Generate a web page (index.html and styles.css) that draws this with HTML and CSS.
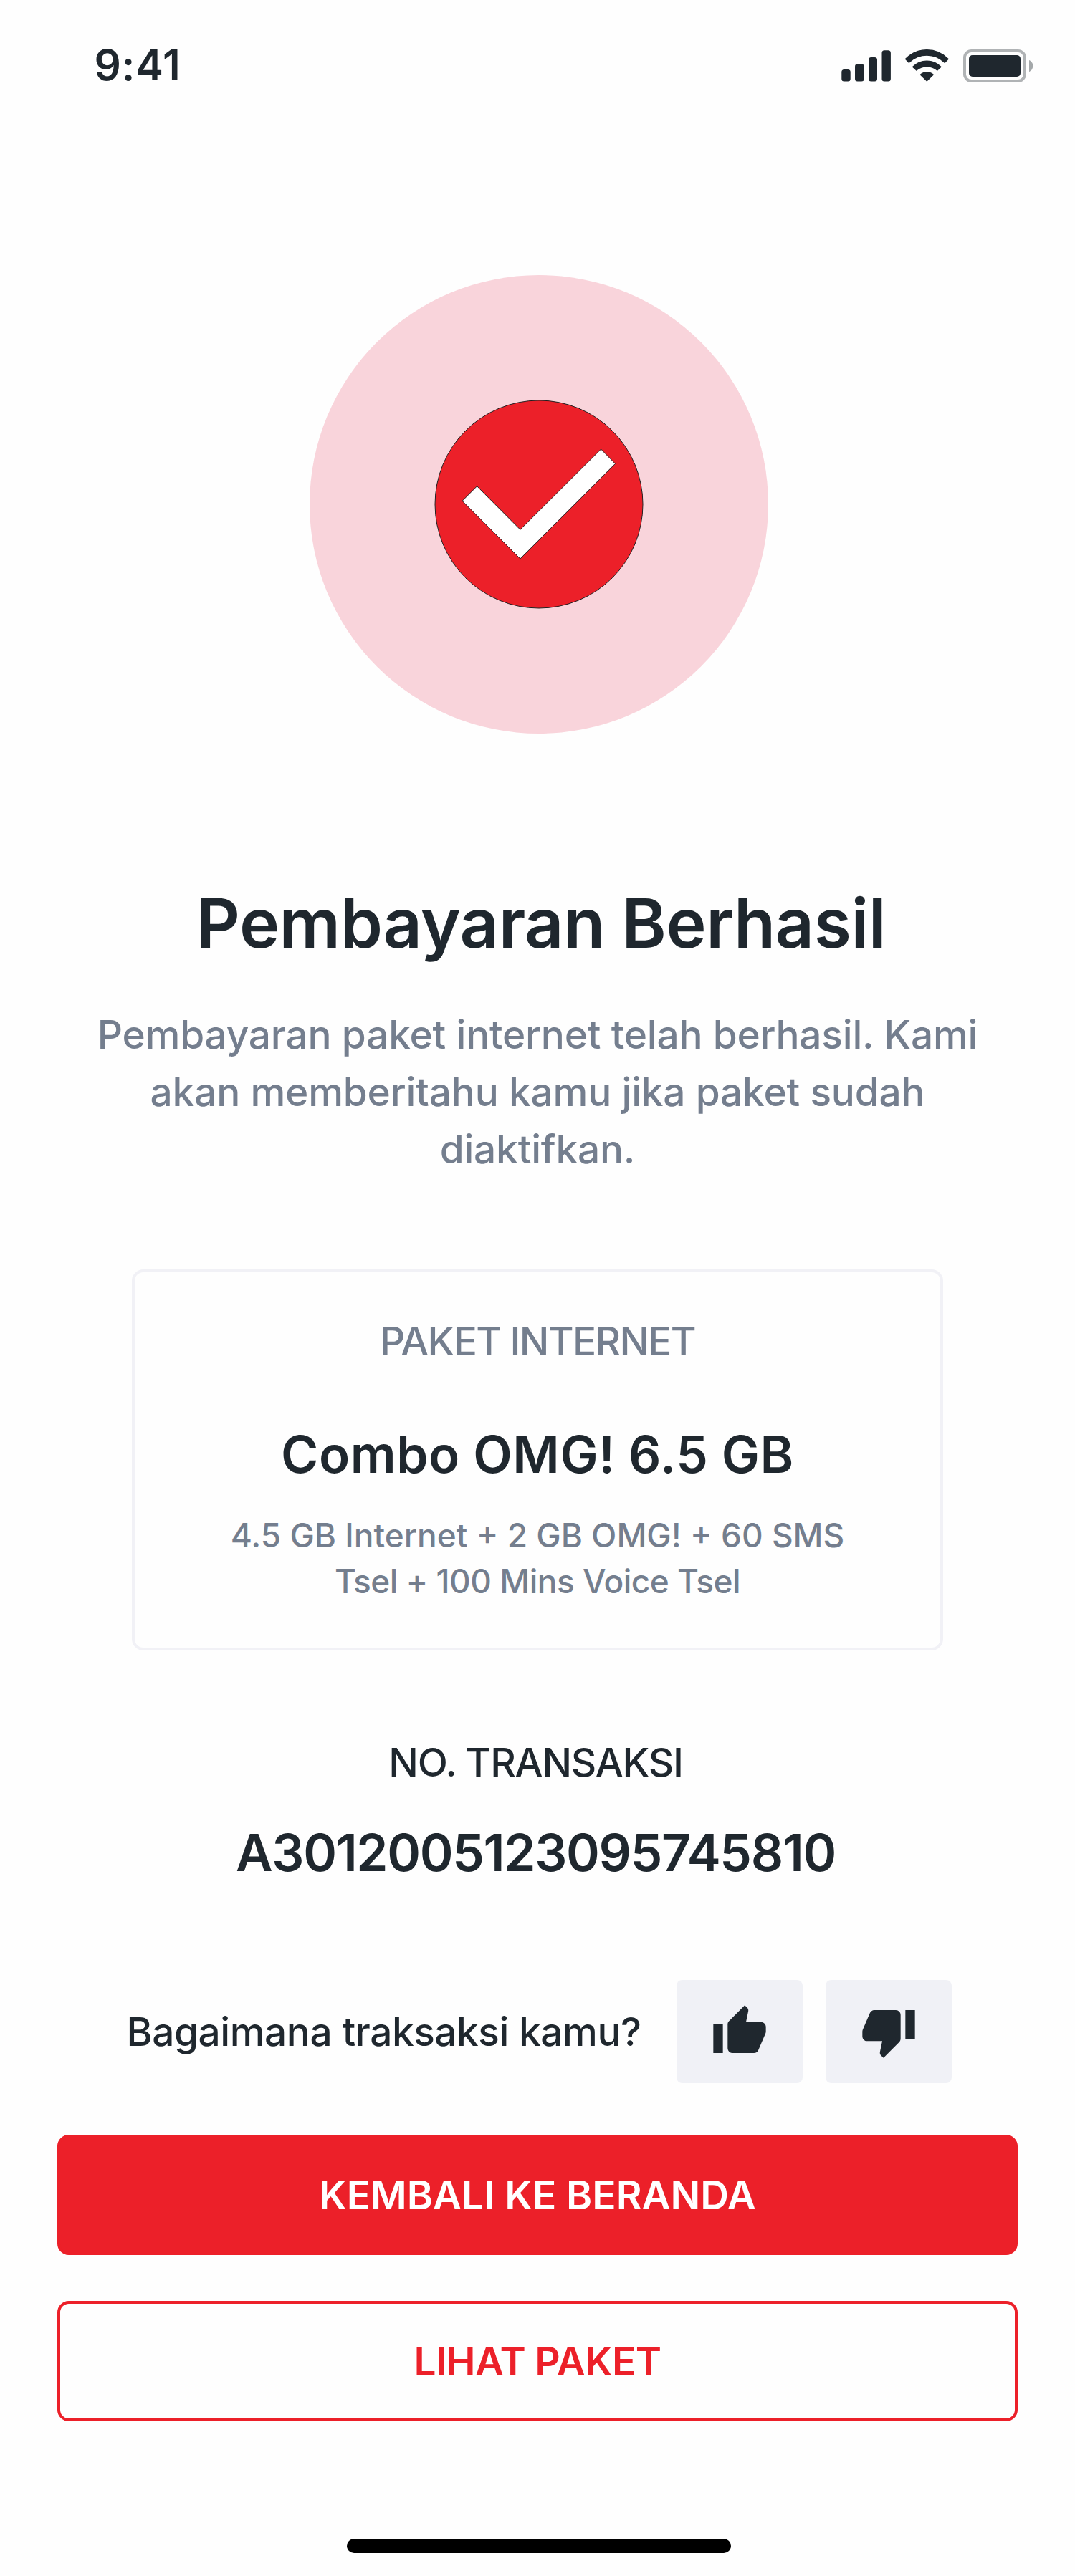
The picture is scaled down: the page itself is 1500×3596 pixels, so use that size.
FILE: index.html
```html
<!DOCTYPE html>
<html lang="id">
<head>
  <meta charset="utf-8">
  <title>Pembayaran Berhasil</title>
  <link rel="stylesheet" href="styles.css">
</head>
<body>
  <div class="screen">
    <header class="status-bar">
      <span class="time">9:41</span>
      <svg class="status-icons" viewBox="0 0 268 48" aria-hidden="true">
        <g fill="#1f272e">
          <rect x="0.3" y="29" width="12.4" height="16.6" rx="3.6"/>
          <rect x="19" y="21.2" width="12.6" height="24.4" rx="3.6"/>
          <rect x="38" y="12" width="12" height="33.6" rx="3.6"/>
          <rect x="56.5" y="2.3" width="12.4" height="43.3" rx="3.6"/>
        </g>
        <g fill="#1f272e" stroke="#1f272e" stroke-width="1.6" stroke-linejoin="round">
          <path d="M89.8 14.4A40.8 40.8 0 0 1 148.8 14.4L144.2 19.2A35.2 35.2 0 0 0 94.4 19.2Z"/>
          <path d="M99.9 25.4A27.2 27.2 0 0 1 138.7 25.4L133.8 29.9A22.6 22.6 0 0 0 104.8 29.9Z"/>
          <path d="M110.6 36.2A13.6 13.6 0 0 1 128 36.2L119.3 44.6Z"/>
        </g>
        <rect x="172" y="3" width="84" height="42" rx="9.5" fill="none" stroke="#1f272e" stroke-opacity=".35" stroke-width="4"/>
        <path d="M262 16C265.2 17.3 267.3 20.6 267.3 24.1S265.2 31 262 32.3Z" fill="#1f272e" fill-opacity=".4"/>
        <rect x="178" y="9" width="72" height="30" rx="5" fill="#1f272e"/>
      </svg>
    </header>

    <main class="content">
      <svg class="success" viewBox="0 0 640 640" role="img" aria-label="Berhasil">
        <circle cx="320" cy="320" r="320" fill="#f9d4db"/>
        <circle cx="320" cy="320" r="145" fill="#ec2029" stroke="#231f20"/>
        <path d="M213 315.3L233.6 294.7L293.9 355.3L406.6 243L426.5 263.3L293.9 396Z" fill="#fff" stroke="#231f20"/>
      </svg>

      <h1 class="title">Pembayaran Berhasil</h1>
      <p class="message">Pembayaran paket internet telah berhasil. Kami<br>akan memberitahu kamu jika paket sudah<br>diaktifkan.</p>

      <section class="package">
        <div class="package-label">PAKET INTERNET</div>
        <h2 class="package-name">Combo OMG! 6.5 GB</h2>
        <p class="package-detail">4.5 GB Internet + 2 GB OMG! + 60 SMS<br><span class="detail-tail">Tsel + 100 Mins Voice Tsel</span></p>
      </section>

      <section class="transaction">
        <div class="transaction-label">NO. TRANSAKSI</div>
        <div class="transaction-number">A3012005123095745810</div>
      </section>

      <section class="feedback">
        <span class="feedback-question">Bagaimana traksaksi kamu?</span>
        <div class="feedback-actions">
          <button class="rate" type="button" aria-label="Suka">
            <svg viewBox="0 0 24 24"><path d="M1 21h4V9H1v12zm22-11c0-1.1-.9-2-2-2h-6.31l.95-4.57.03-.32c0-.41-.17-.79-.44-1.06L14.17 1 7.59 7.59C7.22 7.95 7 8.45 7 9v10c0 1.1.9 2 2 2h9c.83 0 1.54-.5 1.84-1.22l3.02-7.05c.09-.23.14-.47.14-.73v-2z"/></svg>
          </button>
          <button class="rate" type="button" aria-label="Tidak suka">
            <svg viewBox="0 0 24 24"><path d="M15 3H6c-.83 0-1.54.5-1.84 1.22l-3.02 7.05c-.09.23-.14.47-.14.73v2c0 1.1.9 2 2 2h6.31l-.95 4.57-.03.32c0 .41.17.79.44 1.06L9.83 23l6.59-6.59c.36-.36.58-.86.58-1.41V5c0-1.1-.9-2-2-2zm4 0v12h4V3h-4z"/></svg>
          </button>
        </div>
      </section>
    </main>

    <nav class="actions">
      <button class="button button-primary" type="button">KEMBALI KE BERANDA</button>
      <button class="button button-outline" type="button">LIHAT PAKET</button>
    </nav>

    <div class="home-indicator"></div>
  </div>
</body>
</html>
```
FILE: styles.css
```css
* {
  box-sizing: border-box;
}

body {
  margin: 0;
  background: #fefefe;
  color: #1f272e;
  font-family: Inter, "Liberation Sans", sans-serif;
  font-size: 55px;
  font-weight: 500;
  line-height: 80px;
}

h1, h2, p {
  margin: 0;
}

button {
  border: 0;
  font: inherit;
  color: inherit;
}

.screen {
  display: flex;
  flex-direction: column;
  width: 1500px;
  height: 3596px;
  text-align: center;
}

.status-bar {
  display: flex;
  justify-content: space-between;
  align-items: flex-start;
  height: 176px;
  padding: 55px 58px 0 131.5px;
}

.time {
  font-size: 58.5px;
  font-weight: 600;
  line-height: 72px;
  letter-spacing: 0.77px;
}

.status-icons {
  width: 268px;
  height: 48px;
  margin-top: 13px;
}

.content {
  display: flex;
  flex-direction: column;
  align-items: center;
  padding-top: 208px;
}

.success {
  width: 640px;
  height: 640px;
  margin-left: 4px;
}

.title {
  margin-top: 205px;
  padding-left: 10px;
  font-size: 95px;
  font-weight: 600;
  line-height: 120px;
  letter-spacing: -0.46px;
}

.message {
  margin-top: 55px;
  color: #747e8e;
  letter-spacing: -0.22px;
}

.package {
  width: 1132px;
  height: 532px;
  margin-top: 128px;
  padding-top: 56px;
  border: 4px solid #f1f1f6;
  border-radius: 16px;
}

.package-label {
  color: #747e8e;
  letter-spacing: -1.67px;
}

.package-name {
  margin-top: 70px;
  font-size: 71px;
  font-weight: 600;
  line-height: 96px;
  letter-spacing: 0.55px;
}

.package-detail {
  margin-top: 33px;
  color: #747e8e;
  font-size: 46px;
  line-height: 64px;
}

.detail-tail {
  letter-spacing: -0.52px;
}

.transaction {
  margin-top: 116px;
  padding-right: 5px;
}

.transaction-label {
  letter-spacing: -1.22px;
}

.transaction-number {
  margin-top: 38px;
  font-size: 71px;
  font-weight: 600;
  line-height: 96px;
  letter-spacing: -1.33px;
}

.feedback {
  display: flex;
  justify-content: space-between;
  align-items: center;
  align-self: stretch;
  margin-top: 130px;
  padding: 0 172px 0 176.6px;
}

.feedback-question {
  letter-spacing: -0.48px;
}

.feedback-actions {
  display: flex;
  gap: 32px;
}

.rate {
  display: flex;
  padding: 32px 48px;
  border-radius: 8px;
  background: #f0f1f6;
}

.rate svg {
  width: 80px;
  height: 80px;
  fill: #1f272e;
}

.actions {
  display: flex;
  flex-direction: column;
  gap: 64px;
  padding: 72px 80px 0;
}

.button {
  height: 168px;
  padding: 0;
  border: 4px solid #ec2029;
  border-radius: 16px;
  font-weight: 600;
}

.button-primary {
  background: #ec2029;
  color: #fff;
}

.button-outline {
  background: #fefefe;
  color: #ec2029;
  letter-spacing: -0.66px;
}

.home-indicator {
  width: 536px;
  height: 20px;
  margin: auto auto 32px 484px;
  border-radius: 10px;
  background: #000;
}
```
